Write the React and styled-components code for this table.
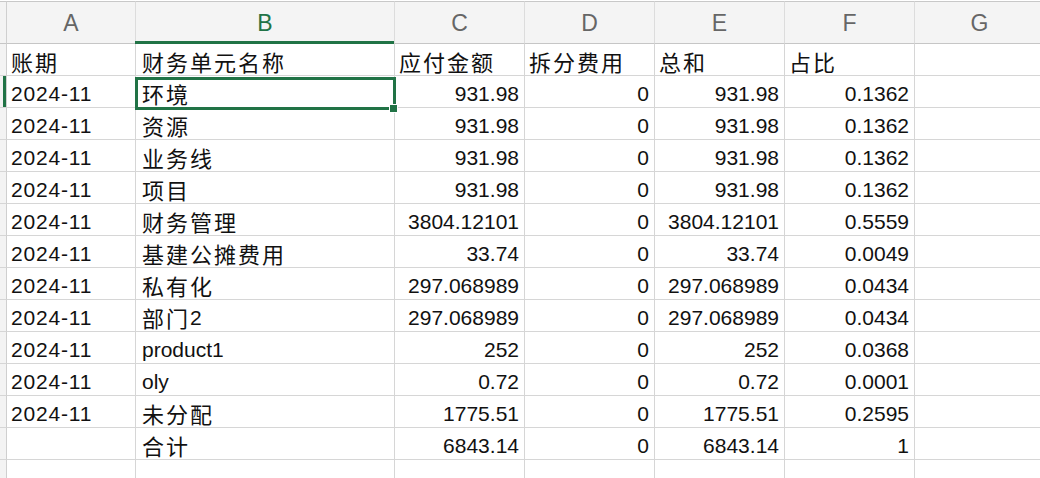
import React from "react";
import styled, { createGlobalStyle, css } from "styled-components";

const GREEN = "#217346";
const GRID = "#d6d6d6";

const Global = createGlobalStyle`
  html, body { margin: 0; padding: 0; background: #fff; overflow: hidden; }
  body { font-family: "Liberation Sans", "Noto Sans CJK SC", sans-serif; }
`;

const Sheet = styled.div`
  margin-top: 1px;
  display: grid;
  grid-template-columns: 7px 129px 259px 130px 130px 130px 130px 130px;
  grid-template-rows: 43px repeat(14, 32px);
  width: 1045px;
`;

const Corner = styled.div`
  box-sizing: border-box;
  background: #f3f3f3;
  border-top: 1px solid #c8c8c8;
  border-right: 1px solid #cfcfcf;
  border-bottom: 1px solid #c6c6c6;
`;

const ColHead = styled.div`
  box-sizing: border-box;
  position: relative;
  background: #f4f4f4;
  border-top: 1px solid #c8c8c8;
  border-right: 1px solid #dcdcdc;
  border-bottom: 1px solid #c6c6c6;
  display: flex;
  align-items: center;
  justify-content: center;
  padding-top: 2px;
  font-family: "Liberation Sans", sans-serif;
  font-size: 23px;
  color: ${(p) => (p.$active ? GREEN : "#666")};
  ${(p) =>
    p.$active &&
    css`
      &::after {
        content: "";
        position: absolute;
        left: -1px;
        right: 0;
        bottom: -1px;
        height: 3px;
        background: ${GREEN};
      }
    `}
`;

const RowStrip = styled.div`
  box-sizing: border-box;
  background: #f3f3f3;
  border-right: 1px solid #cfcfcf;
  border-bottom: 1px solid ${GRID};
  ${(p) =>
    p.$active &&
    css`
      background: linear-gradient(to right, #f3f3f3 3px, ${GREEN} 3px);
    `}
`;

const Cell = styled.div`
  box-sizing: border-box;
  position: relative;
  border-right: 1px solid ${GRID};
  border-bottom: 1px solid ${GRID};
  display: flex;
  align-items: flex-end;
  justify-content: ${(p) => (p.$num ? "flex-end" : "flex-start")};
  padding: 0 ${(p) => (p.$num ? "5px" : "4px")} 3px ${(p) => (p.$pl ?? 4)}px;
  font-size: 21px;
  line-height: 21px;
  color: #111;
  white-space: nowrap;
  overflow: visible;
`;

const Cjk = styled.span`
  font-family: "Noto Sans CJK SC", sans-serif;
  font-size: 22px;
  line-height: 21px;
  letter-spacing: 2px;
  vertical-align: 1px;
`;

const Latin = styled.span`
  font-family: "Liberation Sans", sans-serif;
  letter-spacing: ${(p) => (p.$wide ? "0.8px" : "0")};
`;

const Selection = styled.div`
  position: absolute;
  left: -1px;
  top: 1px;
  right: -2px;
  bottom: -3px;
  border: 3px solid ${GREEN};
  box-sizing: border-box;
  pointer-events: none;
  z-index: 2;
`;

const Handle = styled.div`
  position: absolute;
  right: -5px;
  bottom: -6px;
  width: 9px;
  height: 9px;
  background: ${GREEN};
  border: 1px solid #fff;
  box-sizing: border-box;
  z-index: 3;
`;

const isCjk = (ch) => /[\u3000-\u9fff\uff00-\uffef]/.test(ch);

function Text({ value, wide }) {
  const s = String(value);
  const runs = [];
  for (const ch of s) {
    const c = isCjk(ch);
    const last = runs[runs.length - 1];
    if (last && last.c === c) last.t += ch;
    else runs.push({ c, t: ch });
  }
  return runs.map((r, i) =>
    r.c ? <Cjk key={i}>{r.t}</Cjk> : <Latin key={i} $wide={wide}>{r.t}</Latin>
  );
}

const header = ["账期", "财务单元名称", "应付金额", "拆分费用", "总和", "占比"];
const rows = [
  ["2024-11", "环境", "931.98", "0", "931.98", "0.1362"],
  ["2024-11", "资源", "931.98", "0", "931.98", "0.1362"],
  ["2024-11", "业务线", "931.98", "0", "931.98", "0.1362"],
  ["2024-11", "项目", "931.98", "0", "931.98", "0.1362"],
  ["2024-11", "财务管理", "3804.12101", "0", "3804.12101", "0.5559"],
  ["2024-11", "基建公摊费用", "33.74", "0", "33.74", "0.0049"],
  ["2024-11", "私有化", "297.068989", "0", "297.068989", "0.0434"],
  ["2024-11", "部门2", "297.068989", "0", "297.068989", "0.0434"],
  ["2024-11", "product1", "252", "0", "252", "0.0368"],
  ["2024-11", "oly", "0.72", "0", "0.72", "0.0001"],
  ["2024-11", "未分配", "1775.51", "0", "1775.51", "0.2595"],
  ["", "合计", "6843.14", "0", "6843.14", "1"],
];

const letters = ["A", "B", "C", "D", "E", "F", "G"];

export default function App() {
  return (
    <>
      <Global />
      <Sheet>
        <Corner />
        {letters.map((l) => (
          <ColHead key={l} $active={l === "B"}>
            {l}
          </ColHead>
        ))}

        <RowStrip />
        {header.map((h, i) => (
          <Cell key={i} $pl={i === 1 ? 6 : 4}>
            <Text value={h} />
          </Cell>
        ))}
        <Cell />

        {rows.map((r, ri) => (
          <React.Fragment key={ri}>
            <RowStrip $active={ri === 0} />
            {r.map((v, ci) => (
              <Cell key={ci} $num={ci >= 2} $pl={ci === 1 ? 6 : 4}>
                <Text value={v} wide={ci === 0} />
                {ri === 0 && ci === 1 && (
                  <Selection>
                    <Handle />
                  </Selection>
                )}
              </Cell>
            ))}
            <Cell />
          </React.Fragment>
        ))}

        <RowStrip />
        {letters.map((l) => (
          <Cell key={l} />
        ))}
      </Sheet>
    </>
  );
}
